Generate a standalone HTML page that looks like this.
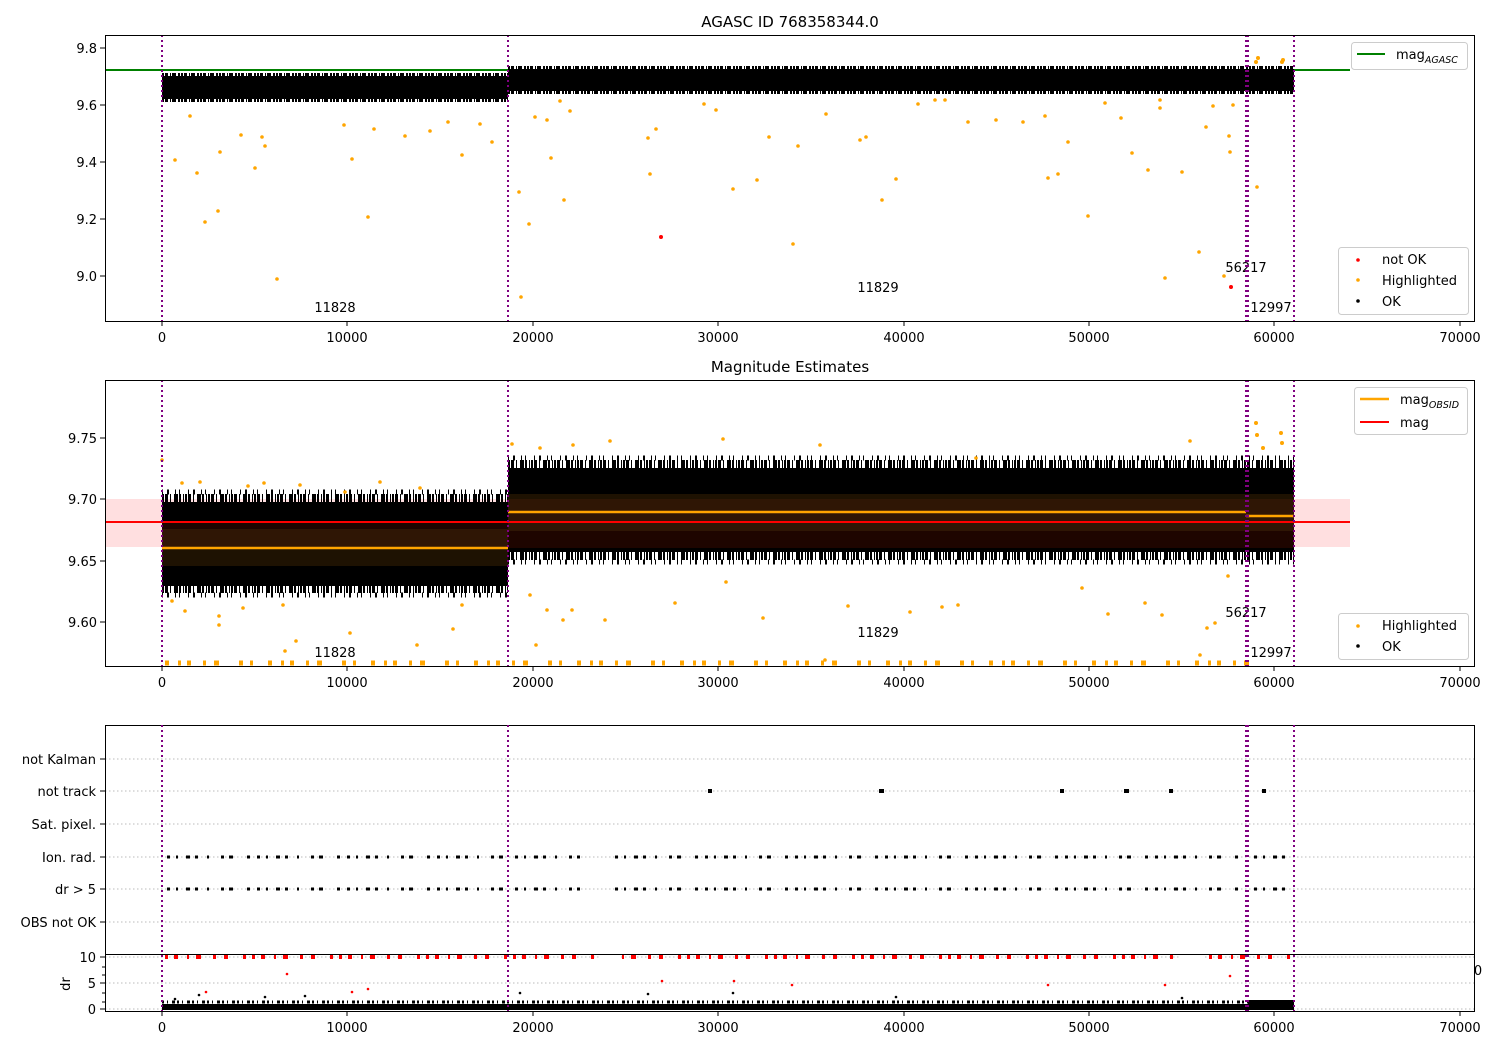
<!DOCTYPE html>
<html><head><meta charset="utf-8"><style>
html,body{margin:0;padding:0;background:#fff;}
svg{display:block;font-family:"DejaVu Sans","Liberation Sans",sans-serif;}
</style></head><body>
<svg width="1500" height="1050" viewBox="0 0 1500 1050" xmlns="http://www.w3.org/2000/svg">
<rect width="1500" height="1050" fill="#fff"/>

<!-- ============ PANEL 1 ============ -->
<text x="790" y="27" font-size="15" text-anchor="middle">AGASC ID 768358344.0</text>
<line x1="105" y1="70" x2="1350" y2="70" stroke="#008000" stroke-width="2"/>
<rect x="162" y="76" width="346" height="23" fill="#000"/>
<rect x="508" y="69" width="786" height="22" fill="#000"/>
<g stroke="#000" stroke-width="4" stroke-dasharray="2 1 3 2 1 1 4 2 2 1">
<line x1="162" y1="75" x2="508" y2="75"/><line x1="162" y1="100" x2="508" y2="100"/>
<line x1="508" y1="68" x2="1294" y2="68"/><line x1="508" y1="92" x2="1294" y2="92"/>
</g>
<g fill="#ffa500">
<circle cx="1256" cy="62" r="2"/><circle cx="1258" cy="58" r="2"/><circle cx="1282" cy="62" r="2"/><circle cx="1283" cy="60" r="2"/>
<circle cx="560" cy="101" r="1.8"/><circle cx="547" cy="120" r="1.8"/><circle cx="535" cy="117" r="1.8"/><circle cx="570" cy="111" r="1.8"/>
<circle cx="175" cy="160" r="1.8"/><circle cx="197" cy="173" r="1.8"/><circle cx="220" cy="152" r="1.8"/><circle cx="190" cy="116" r="1.8"/>
<circle cx="205" cy="222" r="1.8"/><circle cx="218" cy="211" r="1.8"/><circle cx="277" cy="279" r="1.8"/><circle cx="255" cy="168" r="1.8"/>
<circle cx="241" cy="135" r="1.8"/><circle cx="262" cy="137" r="1.8"/><circle cx="265" cy="146" r="1.8"/><circle cx="344" cy="125" r="1.8"/>
<circle cx="352" cy="159" r="1.8"/><circle cx="368" cy="217" r="1.8"/><circle cx="374" cy="129" r="1.8"/><circle cx="405" cy="136" r="1.8"/>
<circle cx="430" cy="131" r="1.8"/><circle cx="448" cy="122" r="1.8"/><circle cx="462" cy="155" r="1.8"/><circle cx="480" cy="124" r="1.8"/>
<circle cx="492" cy="142" r="1.8"/><circle cx="519" cy="192" r="1.8"/><circle cx="521" cy="297" r="1.8"/><circle cx="529" cy="224" r="1.8"/>
<circle cx="551" cy="158" r="1.8"/><circle cx="564" cy="200" r="1.8"/><circle cx="648" cy="138" r="1.8"/><circle cx="650" cy="174" r="1.8"/>
<circle cx="656" cy="129" r="1.8"/><circle cx="704" cy="104" r="1.8"/><circle cx="716" cy="110" r="1.8"/><circle cx="733" cy="189" r="1.8"/>
<circle cx="757" cy="180" r="1.8"/><circle cx="769" cy="137" r="1.8"/><circle cx="793" cy="244" r="1.8"/><circle cx="798" cy="146" r="1.8"/>
<circle cx="826" cy="114" r="1.8"/><circle cx="860" cy="140" r="1.8"/><circle cx="866" cy="137" r="1.8"/><circle cx="882" cy="200" r="1.8"/>
<circle cx="896" cy="179" r="1.8"/><circle cx="918" cy="104" r="1.8"/><circle cx="935" cy="100" r="1.8"/><circle cx="945" cy="100" r="1.8"/>
<circle cx="968" cy="122" r="1.8"/><circle cx="996" cy="120" r="1.8"/><circle cx="1023" cy="122" r="1.8"/><circle cx="1045" cy="116" r="1.8"/>
<circle cx="1048" cy="178" r="1.8"/><circle cx="1058" cy="174" r="1.8"/><circle cx="1068" cy="142" r="1.8"/><circle cx="1088" cy="216" r="1.8"/>
<circle cx="1105" cy="103" r="1.8"/><circle cx="1121" cy="118" r="1.8"/><circle cx="1132" cy="153" r="1.8"/><circle cx="1148" cy="170" r="1.8"/>
<circle cx="1160" cy="100" r="1.8"/><circle cx="1165" cy="278" r="1.8"/><circle cx="1182" cy="172" r="1.8"/><circle cx="1199" cy="252" r="1.8"/>
<circle cx="1206" cy="127" r="1.8"/><circle cx="1213" cy="106" r="1.8"/><circle cx="1229" cy="136" r="1.8"/><circle cx="1230" cy="152" r="1.8"/>
<circle cx="1224" cy="276" r="1.8"/><circle cx="1257" cy="187" r="1.8"/><circle cx="1233" cy="105" r="1.8"/><circle cx="1160" cy="108" r="1.8"/>
</g>
<circle cx="661" cy="237" r="2" fill="#f00"/><circle cx="1231" cy="287" r="2" fill="#f00"/>
<g font-size="13" text-anchor="middle" fill="#000">
<text x="335" y="312">11828</text><text x="878" y="292">11829</text><text x="1246" y="272">56217</text><text x="1271" y="312">12997</text>
</g>
<g stroke="#800080" stroke-width="2" stroke-dasharray="2 3">
<line x1="162" y1="35" x2="162" y2="321"/><line x1="508" y1="35" x2="508" y2="321"/>
<line x1="1246" y1="35" x2="1246" y2="321"/><line x1="1248" y1="35" x2="1248" y2="321"/><line x1="1294" y1="35" x2="1294" y2="321"/>
</g>
<rect x="105.5" y="35.5" width="1369" height="286" fill="none" stroke="#000"/>
<g stroke="#000">
<line x1="100" y1="48" x2="105" y2="48"/><line x1="100" y1="105" x2="105" y2="105"/><line x1="100" y1="162" x2="105" y2="162"/>
<line x1="100" y1="219" x2="105" y2="219"/><line x1="100" y1="276" x2="105" y2="276"/>
</g>
<g font-size="13" text-anchor="end">
<text x="97" y="53">9.8</text><text x="97" y="110">9.6</text><text x="97" y="167">9.4</text><text x="97" y="224">9.2</text><text x="97" y="281">9.0</text>
</g>
<rect x="1351.5" y="42.5" width="116" height="27" rx="3" fill="#fff" fill-opacity=".85" stroke="#ccc"/>
<line x1="1357" y1="54" x2="1385" y2="54" stroke="#008000" stroke-width="2"/>
<text x="1396" y="59" font-size="13">mag<tspan font-size="9.5" font-style="italic" dy="4">AGASC</tspan></text>
<rect x="1338.5" y="247.5" width="130" height="67" rx="3" fill="#fff" fill-opacity=".85" stroke="#ccc"/>
<circle cx="1358" cy="260" r="1.8" fill="#f00"/><circle cx="1358" cy="280" r="1.8" fill="#ffa500"/><circle cx="1358" cy="301" r="1.8" fill="#000"/>
<g font-size="13"><text x="1382" y="264">not OK</text><text x="1382" y="285">Highlighted</text><text x="1382" y="306">OK</text></g>

<!-- ============ PANEL 2 ============ -->
<text x="790" y="372" font-size="15" text-anchor="middle">Magnitude Estimates</text>
<rect x="105" y="499" width="1245" height="48" fill="#ffdfe0"/>
<rect x="162" y="502" width="346" height="84" fill="#000"/>
<rect x="508" y="468" width="786" height="84" fill="#000"/>
<g stroke="#000" stroke-width="8" stroke-dasharray="2 1 3 2 1 3 4 1 2 2 1 1">
<line x1="162" y1="498" x2="508" y2="498"/><line x1="162" y1="589" x2="508" y2="589"/>
<line x1="508" y1="464" x2="1294" y2="464"/><line x1="508" y1="556" x2="1294" y2="556"/>
</g>
<g stroke="#000" stroke-width="5" stroke-dasharray="1 4 2 6 1 3 1 8">
<line x1="162" y1="492" x2="508" y2="492"/><line x1="162" y1="595" x2="508" y2="595"/>
<line x1="508" y1="458" x2="1294" y2="458"/><line x1="508" y1="562" x2="1294" y2="562"/>
</g>
<rect x="162" y="522" width="346" height="8" fill="#1e0500"/>
<rect x="162" y="529" width="346" height="37" fill="#2f1605"/>
<rect x="162" y="547" width="346" height="19" fill="#1e1202"/>
<rect x="508" y="494" width="786" height="5" fill="#1e1202"/>
<rect x="508" y="499" width="786" height="32" fill="#2f1605"/>
<rect x="508" y="531" width="786" height="17" fill="#1e0500"/>
<line x1="162" y1="548" x2="508" y2="548" stroke="#ffa500" stroke-width="2.5"/>
<line x1="508" y1="512" x2="1246" y2="512" stroke="#ffa500" stroke-width="2.5"/>
<line x1="1246" y1="516" x2="1294" y2="516" stroke="#ffa500" stroke-width="2.5"/>
<line x1="105" y1="522" x2="1350" y2="522" stroke="#f00" stroke-width="2"/>
<g fill="#ffa500">
<circle cx="1256" cy="423" r="2"/><circle cx="1257" cy="435" r="2"/><circle cx="1263" cy="448" r="2"/><circle cx="1281" cy="433" r="2"/><circle cx="1282" cy="443" r="2"/>
<circle cx="162" cy="460" r="1.8"/><circle cx="182" cy="483" r="1.8"/><circle cx="200" cy="482" r="1.8"/><circle cx="248" cy="486" r="1.8"/><circle cx="264" cy="483" r="1.8"/>
<circle cx="300" cy="485" r="1.8"/><circle cx="345" cy="492" r="1.8"/><circle cx="380" cy="482" r="1.8"/><circle cx="420" cy="488" r="1.8"/>
<circle cx="172" cy="601" r="1.8"/><circle cx="185" cy="611" r="1.8"/><circle cx="219" cy="616" r="1.8"/><circle cx="219" cy="625" r="1.8"/><circle cx="243" cy="608" r="1.8"/>
<circle cx="283" cy="605" r="1.8"/><circle cx="296" cy="641" r="1.8"/><circle cx="350" cy="633" r="1.8"/><circle cx="285" cy="651" r="1.8"/><circle cx="417" cy="645" r="1.8"/><circle cx="453" cy="629" r="1.8"/><circle cx="462" cy="605" r="1.8"/>
<circle cx="512" cy="444" r="1.8"/><circle cx="540" cy="448" r="1.8"/><circle cx="573" cy="445" r="1.8"/><circle cx="610" cy="441" r="1.8"/><circle cx="723" cy="439" r="1.8"/><circle cx="820" cy="445" r="1.8"/><circle cx="976" cy="458" r="1.8"/><circle cx="1190" cy="441" r="1.8"/>
<circle cx="530" cy="595" r="1.8"/><circle cx="547" cy="610" r="1.8"/><circle cx="536" cy="645" r="1.8"/><circle cx="563" cy="620" r="1.8"/><circle cx="572" cy="610" r="1.8"/>
<circle cx="605" cy="620" r="1.8"/><circle cx="675" cy="603" r="1.8"/><circle cx="726" cy="582" r="1.8"/><circle cx="763" cy="618" r="1.8"/><circle cx="825" cy="660" r="1.8"/><circle cx="848" cy="606" r="1.8"/>
<circle cx="910" cy="612" r="1.8"/><circle cx="942" cy="607" r="1.8"/><circle cx="958" cy="605" r="1.8"/><circle cx="1082" cy="588" r="1.8"/><circle cx="1108" cy="614" r="1.8"/><circle cx="1145" cy="603" r="1.8"/>
<circle cx="1162" cy="615" r="1.8"/><circle cx="1207" cy="628" r="1.8"/><circle cx="1215" cy="623" r="1.8"/><circle cx="1228" cy="576" r="1.8"/><circle cx="1200" cy="655" r="1.8"/>
</g>
<line x1="165" y1="663" x2="1260" y2="663" stroke="#ffa500" stroke-width="5" stroke-dasharray="4 9 3 6 4 12 3 8 5 20 4 7 3 15"/>
<rect x="106" y="660" width="56" height="6" fill="#fff"/>
<g font-size="13" text-anchor="middle">
<text x="335" y="657">11828</text><text x="878" y="637">11829</text><text x="1246" y="617">56217</text><text x="1271" y="657">12997</text>
</g>
<g stroke="#800080" stroke-width="2" stroke-dasharray="2 3">
<line x1="162" y1="380" x2="162" y2="666"/><line x1="508" y1="380" x2="508" y2="666"/>
<line x1="1246" y1="380" x2="1246" y2="666"/><line x1="1248" y1="380" x2="1248" y2="666"/><line x1="1294" y1="380" x2="1294" y2="666"/>
</g>
<rect x="105.5" y="380.5" width="1369" height="286" fill="none" stroke="#000"/>
<g stroke="#000">
<line x1="100" y1="438" x2="105" y2="438"/><line x1="100" y1="499" x2="105" y2="499"/><line x1="100" y1="561" x2="105" y2="561"/><line x1="100" y1="622" x2="105" y2="622"/>
</g>
<g font-size="13" text-anchor="end">
<text x="97" y="443">9.75</text><text x="97" y="504">9.70</text><text x="97" y="566">9.65</text><text x="97" y="627">9.60</text>
</g>
<rect x="1354.5" y="387.5" width="113" height="47" rx="3" fill="#fff" fill-opacity=".85" stroke="#ccc"/>
<line x1="1360" y1="399" x2="1389" y2="399" stroke="#ffa500" stroke-width="2.5"/>
<line x1="1360" y1="422" x2="1389" y2="422" stroke="#f00" stroke-width="2"/>
<text x="1400" y="404" font-size="13">mag<tspan font-size="9.5" font-style="italic" dy="4">OBSID</tspan></text>
<text x="1400" y="427" font-size="13">mag</text>
<rect x="1338.5" y="613.5" width="130" height="46" rx="3" fill="#fff" fill-opacity=".85" stroke="#ccc"/>
<circle cx="1358" cy="626" r="1.8" fill="#ffa500"/><circle cx="1358" cy="646" r="1.8" fill="#000"/>
<g font-size="13"><text x="1382" y="630">Highlighted</text><text x="1382" y="651">OK</text></g>

<g stroke="#000">
<line x1="162" y1="321" x2="162" y2="326"/><line x1="347" y1="321" x2="347" y2="326"/><line x1="533" y1="321" x2="533" y2="326"/><line x1="718" y1="321" x2="718" y2="326"/><line x1="904" y1="321" x2="904" y2="326"/><line x1="1089" y1="321" x2="1089" y2="326"/><line x1="1274" y1="321" x2="1274" y2="326"/><line x1="1460" y1="321" x2="1460" y2="326"/>
<line x1="162" y1="666" x2="162" y2="671"/><line x1="347" y1="666" x2="347" y2="671"/><line x1="533" y1="666" x2="533" y2="671"/><line x1="718" y1="666" x2="718" y2="671"/><line x1="904" y1="666" x2="904" y2="671"/><line x1="1089" y1="666" x2="1089" y2="671"/><line x1="1274" y1="666" x2="1274" y2="671"/><line x1="1460" y1="666" x2="1460" y2="671"/>
<line x1="162" y1="1011" x2="162" y2="1016"/><line x1="347" y1="1011" x2="347" y2="1016"/><line x1="533" y1="1011" x2="533" y2="1016"/><line x1="718" y1="1011" x2="718" y2="1016"/><line x1="904" y1="1011" x2="904" y2="1016"/><line x1="1089" y1="1011" x2="1089" y2="1016"/><line x1="1274" y1="1011" x2="1274" y2="1016"/><line x1="1460" y1="1011" x2="1460" y2="1016"/>
</g>
<g font-size="13" text-anchor="middle">
<text x="162" y="342">0</text><text x="347" y="342">10000</text><text x="533" y="342">20000</text><text x="718" y="342">30000</text><text x="904" y="342">40000</text><text x="1089" y="342">50000</text><text x="1274" y="342">60000</text><text x="1460" y="342">70000</text>
<text x="162" y="687">0</text><text x="347" y="687">10000</text><text x="533" y="687">20000</text><text x="718" y="687">30000</text><text x="904" y="687">40000</text><text x="1089" y="687">50000</text><text x="1274" y="687">60000</text><text x="1460" y="687">70000</text>
<text x="162" y="1032">0</text><text x="347" y="1032">10000</text><text x="533" y="1032">20000</text><text x="718" y="1032">30000</text><text x="904" y="1032">40000</text><text x="1089" y="1032">50000</text><text x="1274" y="1032">60000</text><text x="1460" y="1032">70000</text>
<text x="1478" y="975">0</text>
</g>

<!-- ============ PANEL 3 ============ -->
<g stroke="#bbb" stroke-dasharray="1.5 2.5">
<line x1="105" y1="759" x2="1475" y2="759"/><line x1="105" y1="791" x2="1475" y2="791"/><line x1="105" y1="824" x2="1475" y2="824"/>
<line x1="105" y1="857" x2="1475" y2="857"/><line x1="105" y1="889" x2="1475" y2="889"/><line x1="105" y1="922" x2="1475" y2="922"/>
<line x1="105" y1="957" x2="1475" y2="957"/><line x1="105" y1="983" x2="1475" y2="983"/><line x1="105" y1="1009" x2="1475" y2="1009"/>
</g>
<g stroke="#000" stroke-width="3" stroke-dasharray="3 6 2 8 4 5 3 9 2 12 3 5 4 14 3 7">
<line x1="167" y1="857" x2="506" y2="857"/><line x1="515" y1="857" x2="580" y2="857"/><line x1="615" y1="857" x2="1242" y2="857"/><line x1="1254" y1="857" x2="1292" y2="857"/>
<line x1="167" y1="889" x2="506" y2="889"/><line x1="515" y1="889" x2="580" y2="889"/><line x1="615" y1="889" x2="1242" y2="889"/><line x1="1254" y1="889" x2="1292" y2="889"/>
</g>
<g fill="#000">
<rect x="708" y="789" width="4" height="4"/><rect x="879" y="789" width="5" height="4"/><rect x="1060" y="789" width="4" height="4"/><rect x="1124" y="789" width="5" height="4"/><rect x="1169" y="789" width="4" height="4"/><rect x="1262" y="789" width="4" height="4"/>
</g>
<g font-size="13" text-anchor="end">
<text x="96" y="764">not Kalman</text><text x="96" y="796">not track</text><text x="96" y="829">Sat. pixel.</text>
<text x="96" y="862">Ion. rad.</text><text x="96" y="894">dr &gt; 5</text><text x="96" y="927">OBS not OK</text>
</g>
<g stroke="#000">
<line x1="100" y1="759" x2="105" y2="759"/><line x1="100" y1="791" x2="105" y2="791"/><line x1="100" y1="824" x2="105" y2="824"/>
<line x1="100" y1="857" x2="105" y2="857"/><line x1="100" y1="889" x2="105" y2="889"/><line x1="100" y1="922" x2="105" y2="922"/>
</g>
<rect x="105.5" y="725.5" width="1369" height="229" fill="none" stroke="#000"/>
<line x1="165" y1="957" x2="1290" y2="957" stroke="#f00" stroke-width="4" stroke-dasharray="3 6 4 9 2 7 5 12 3 8 4 15 3 6"/>
<rect x="600" y="954" width="20" height="6" fill="#fff"/><rect x="1180" y="954" width="25" height="6" fill="#fff"/>
<rect x="162" y="1004" width="1132" height="6" fill="#000"/>
<g stroke="#000" stroke-width="3" stroke-dasharray="2 3 1 4 3 2"><line x1="162" y1="1002" x2="1294" y2="1002"/></g>
<rect x="1248" y="1000" width="46" height="4" fill="#000"/>
<g fill="#000"><circle cx="175" cy="999" r="1.3"/><circle cx="199" cy="995" r="1.3"/><circle cx="265" cy="997" r="1.3"/><circle cx="305" cy="996" r="1.3"/><circle cx="520" cy="993" r="1.3"/><circle cx="648" cy="994" r="1.3"/><circle cx="733" cy="993" r="1.3"/><circle cx="896" cy="997" r="1.3"/><circle cx="1182" cy="998" r="1.3"/></g>
<g fill="#f00"><circle cx="206" cy="992" r="1.3"/><circle cx="287" cy="974" r="1.3"/><circle cx="352" cy="992" r="1.3"/><circle cx="368" cy="989" r="1.3"/><circle cx="662" cy="981" r="1.3"/><circle cx="734" cy="981" r="1.3"/><circle cx="792" cy="985" r="1.3"/><circle cx="1048" cy="985" r="1.3"/><circle cx="1165" cy="985" r="1.3"/><circle cx="1230" cy="976" r="1.3"/></g>
<rect x="105.5" y="954.5" width="1369" height="57" fill="none" stroke="#000"/>
<g stroke="#000">
<line x1="100" y1="957" x2="105" y2="957"/><line x1="100" y1="983" x2="105" y2="983"/><line x1="100" y1="1009" x2="105" y2="1009"/>
<line x1="102" y1="967" x2="105" y2="967"/><line x1="102" y1="993" x2="105" y2="993"/><line x1="102" y1="1002" x2="105" y2="1002"/><line x1="102" y1="975" x2="105" y2="975"/>
</g>
<g font-size="13" text-anchor="end"><text x="96" y="962">10</text><text x="96" y="988">5</text><text x="96" y="1014">0</text></g>
<text x="70" y="984" font-size="13" text-anchor="middle" transform="rotate(-90 70 984)">dr</text>
<g stroke="#800080" stroke-width="2" stroke-dasharray="2 3">
<line x1="162" y1="725" x2="162" y2="1011"/><line x1="508" y1="725" x2="508" y2="1011"/>
<line x1="1246" y1="725" x2="1246" y2="1011"/><line x1="1248" y1="725" x2="1248" y2="1011"/><line x1="1294" y1="725" x2="1294" y2="1011"/>
</g>
</svg>
</body></html>
